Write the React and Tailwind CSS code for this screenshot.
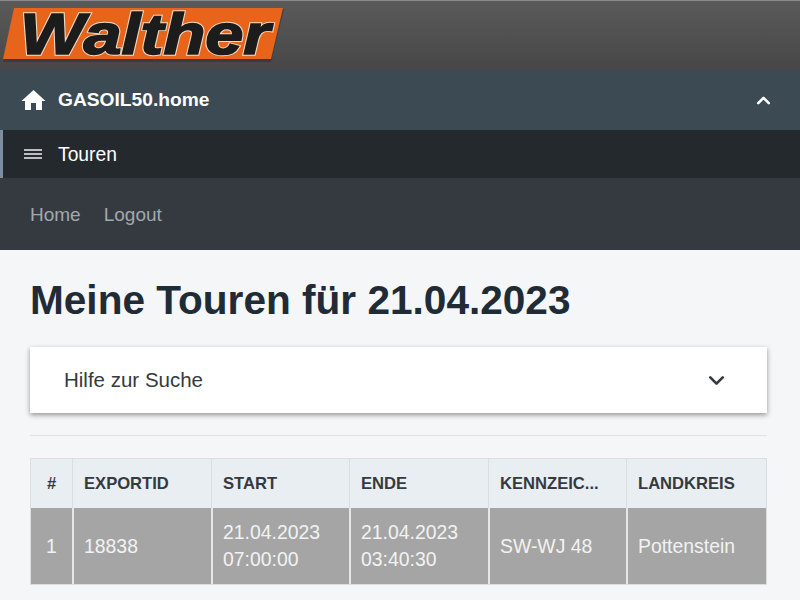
import { ChevronDown, ChevronUp } from 'lucide-react';

const columns = [
  { label: '#', width: 'w-[41px]', center: true },
  { label: 'EXPORTID', width: 'w-[139px]' },
  { label: 'START', width: 'w-[138px]' },
  { label: 'ENDE', width: 'w-[139px]' },
  { label: 'KENNZEIC...', width: 'w-[138px]' },
  { label: 'LANDKREIS', width: 'flex-1' },
];

const row = ['1', '18838', ['21.04.2023', '07:00:00'], ['21.04.2023', '03:40:30'], 'SW-WJ 48', 'Pottenstein'];

function Logo() {
  return (
    <svg width="290" height="64" viewBox="0 0 290 64" className="block">
      <polygon points="15,8 284,8 271,61 3,61" fill="#2c2c2c" opacity="0.5" />
      <polygon points="14,7 283,7 271,58 3,58" fill="#e8641b" />
      <text
        x="20"
        y="53"
        fontFamily="'Liberation Sans', sans-serif"
        fontWeight="700"
        fontStyle="italic"
        fontSize="58"
        textLength="250"
        lengthAdjust="spacingAndGlyphs"
        fill="#1c1c1c"
        stroke="#f3d9c4"
        strokeWidth="3.4"
      >
        Walther
      </text>
      <text
        x="20"
        y="53"
        fontFamily="'Liberation Sans', sans-serif"
        fontWeight="700"
        fontStyle="italic"
        fontSize="58"
        textLength="250"
        lengthAdjust="spacingAndGlyphs"
        fill="#1c1c1c"
        stroke="#1c1c1c"
        strokeWidth="1.6"
      >
        Walther
      </text>
    </svg>
  );
}

function HomeIcon() {
  return (
    <svg width="25" height="22" viewBox="0 0 25 22" className="block">
      <path d="M12.5 1 L24.5 12 H21 V21 H15 V14 H10 V21 H4 V12 H0.5 Z" fill="white" />
    </svg>
  );
}

export default function App() {
  return (
    <div className="w-[800px] h-[600px] overflow-hidden bg-[#f4f6f8] font-['Liberation_Sans',sans-serif]">
      {/* Logo bar */}
      <div className="h-[70px] bg-gradient-to-b from-[#5a5a5a] to-[#474747] border-t border-[#8a8a8a]">
        <Logo />
      </div>

      {/* Sidebar style menu */}
      <div className="h-[60px] flex items-center justify-between pl-[21px] pr-[26px] bg-[#3c4a54] text-white">
        <div className="flex items-center gap-[12px]">
          <HomeIcon />
          <span className="text-[19.2px] font-bold">GASOIL50.home</span>
        </div>
        <ChevronUp size={21} strokeWidth={3} />
      </div>
      <div className="h-[48px] flex items-center pl-[21px] bg-[#24292d] border-l-[3px] border-[#7d8f9f] text-white">
        <svg width="18" height="10" viewBox="0 0 18 10" className="mr-[16px]">
          <path d="M0 1h18M0 5h18M0 9h18" stroke="#eef0f2" strokeWidth="1.5" />
        </svg>
        <span className="text-[19.3px] pt-[2px]">Touren</span>
      </div>
      <div className="h-[72px] flex items-center gap-[23px] pl-[30px] pt-[2px] bg-[#343a40] text-[#a3a8ad] text-[19px]">
        <span>Home</span>
        <span>Logout</span>
      </div>

      {/* Main content */}
      <div className="px-[30px] pr-[33px]">
        <h1 className="mt-[25px] text-[40.6px] leading-[50px] font-bold text-[#212b36]">Meine Touren für 21.04.2023</h1>

        <div className="mt-[22px] h-[66px] flex items-center justify-between pl-[34px] pr-[38px] bg-white shadow-[0_2px_5px_rgba(0,0,0,0.4)] text-[#343a40] text-[20.5px]">
          <span>Hilfe zur Suche</span>
          <ChevronDown size={25} strokeWidth={2.6} />
        </div>

        <div className="mt-[22px] border-t border-[#dfe3e7]" />

        <div className="mt-[22px] border border-[#d9dee3]">
          <div className="flex h-[49px] bg-[#e9eef2] text-[#343a40] text-[16.6px] font-bold">
            {columns.map((col, i) => (
              <div
                key={col.label}
                className={`${col.width} flex items-center pt-[2px] ${col.center ? 'justify-center' : 'pl-[11px]'} ${i > 0 ? 'border-l border-[#d9dee3]' : ''}`}
              >
                {col.label}
              </div>
            ))}
          </div>
          <div className="flex h-[76px] bg-[#a5a5a5] text-[#f2f2f2] text-[19.4px] leading-[27px]">
            {row.map((cell, i) => (
              <div
                key={i}
                className={`${columns[i].width} flex flex-col justify-center ${columns[i].center ? 'items-center' : 'pl-[10px]'} ${i > 0 ? 'border-l-2 border-[#e4e6e8]' : ''}`}
              >
                {Array.isArray(cell) ? cell.map((line) => <span key={line}>{line}</span>) : cell}
              </div>
            ))}
          </div>
        </div>
      </div>
    </div>
  );
}
